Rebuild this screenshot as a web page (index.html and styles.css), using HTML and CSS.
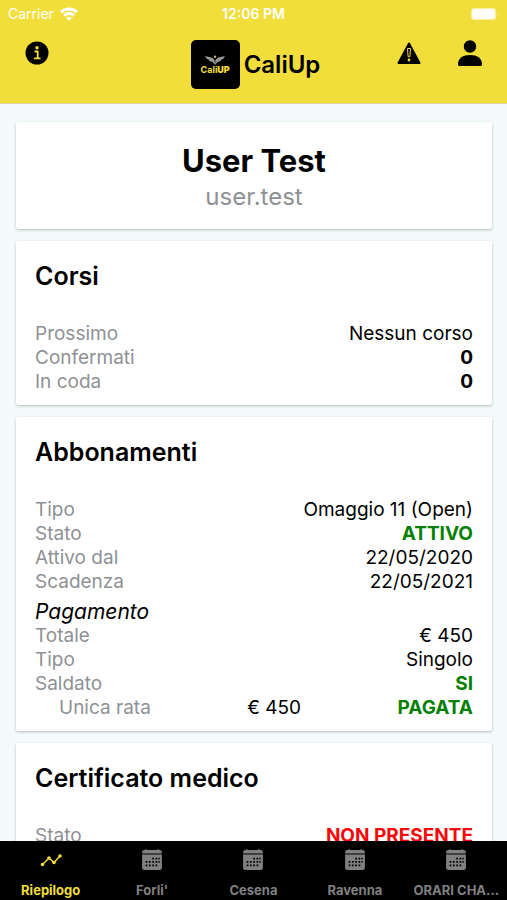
FILE: index.html
```html
<!DOCTYPE html>
<html lang="it">

<head>
    <meta charset="UTF-8">
    <meta name="viewport" content="width=device-width, initial-scale=1">
    <title>CaliUp</title>
    <link rel="stylesheet" href="styles.css">
</head>

<body>
    <svg class="sprite" aria-hidden="true">
        <symbol id="calendar" viewBox="0 0 20 20">
            <path fill="currentColor" d="M3 1h1V0h1v1h10V0h1v1h1a2 2 0 0 1 2 2v1H1V3a2 2 0 0 1 2-2z" />
            <path fill="currentColor" d="M1 5h18v12a2 2 0 0 1-2 2H3a2 2 0 0 1-2-2z" />
            <path fill="#000" d="M10.200 8h1.600v1.600h-1.600zM13.200 8h1.600v1.600h-1.600zM15.800 8h1.200v1.600h-1.200zM4.200 11h1.600v1.600H4.200zM7.200 11h1.600v1.600H7.200zM10.200 11h1.600v1.600h-1.600zM13.200 11h1.600v1.600h-1.600zM15.800 11h1.200v1.600h-1.200zM4.200 14h1.600v1.600H4.200zM7.200 14h1.600v1.600H7.200zM10.200 14h1.600v1.600h-1.600zM13.200 14h1.600v1.600h-1.600z" />
        </symbol>
    </svg>

    <header class="header">
        <div class="status-bar">
            <div class="carrier">
                <span>Carrier</span>
                <svg width="18" height="14" viewBox="0 0 18 14" fill="none" stroke="#fff" stroke-width="3">
                    <path d="M1 5.200a11.300 11.300 0 0 1 16 0" />
                    <path d="M4.200 8.600a6.800 6.800 0 0 1 9.600 0" />
                    <path fill="#fff" stroke="none" d="M9 14l-2.700-2.900a3.900 3.900 0 0 1 5.400 0z" />
                </svg>
            </div>
            <span class="time">12:06 PM</span>
            <svg class="battery" width="28" height="12" viewBox="0 0 28 12">
                <rect width="25" height="12" rx="3" fill="#fff" opacity=".5" />
                <rect x="1" y="1" width="23" height="10" rx="2" fill="#fff" />
                <path d="M26 4q2 2 0 4z" fill="#fff" opacity=".5" />
            </svg>
        </div>
        <div class="toolbar">
            <button type="button" class="icon-button" aria-label="Informazioni">
                <svg width="24" height="26" viewBox="0 0 24 26">
                    <circle cx="12" cy="13" r="11.500" />
                    <circle cx="12" cy="7.700" r="1.700" fill="#f2de3a" />
                    <path d="M9.500 11.500h3.200v6.700M9 18.300h6.500" fill="none" stroke="#f2de3a" stroke-width="1.800" />
                </svg>
            </button>
            <div class="brand">
                <div class="logo">
                    <svg width="22" height="10" viewBox="0 0 24 11" fill="#999">
                        <path d="M1 1l8 2 2.500 2.500L12 11l-3-3.500-3-.5-1-2-2-.5z" />
                        <path d="M23 1l-8 2-2.500 2.500L12 11l3-3.500 3-.5 1-2 2-.5z" />
                        <circle cx="12" cy="1.800" r="1.300" fill="#c9bd57" />
                    </svg>
                    <span class="logo-text">Cali<b>UP</b></span>
                </div>
                <h1>CaliUp</h1>
            </div>
            <div class="actions">
                <button type="button" class="icon-button" aria-label="Avvisi">
                    <svg width="24" height="26" viewBox="0 0 24 26">
                        <path d="M12 3.500L22.500 23h-21z" stroke="#000" stroke-width="2" stroke-linejoin="round" />
                        <path d="M10.500 8.500h3l-.6 8.200h-1.800z" fill="#000" stroke="#f2de3a" stroke-width="1" />
                        <circle cx="12" cy="20" r="1.400" fill="#f2de3a" />
                    </svg>
                </button>
                <button type="button" class="icon-button" aria-label="Profilo">
                    <svg width="24" height="26" viewBox="0 0 24 26">
                        <circle cx="12" cy="6.500" r="6.200" />
                        <path d="M0 24.500C0 18 5 15 12 15s12 3 12 9.500q0 1.500-1.500 1.500h-21Q0 26 0 24.500z" />
                    </svg>
                </button>
            </div>
        </div>
    </header>

    <main class="content">
        <section class="card profile">
            <h2>User Test</h2>
            <p>user.test</p>
        </section>

        <section class="card">
            <h3>Corsi</h3>
            <dl>
                <div class="row"><dt>Prossimo</dt><dd>Nessun corso</dd></div>
                <div class="row"><dt>Confermati</dt><dd class="bold">0</dd></div>
                <div class="row"><dt>In coda</dt><dd class="bold">0</dd></div>
            </dl>
        </section>

        <section class="card">
            <h3>Abbonamenti</h3>
            <dl>
                <div class="row"><dt>Tipo</dt><dd>Omaggio 11 (Open)</dd></div>
                <div class="row"><dt>Stato</dt><dd class="ok">ATTIVO</dd></div>
                <div class="row"><dt>Attivo dal</dt><dd>22/05/2020</dd></div>
                <div class="row"><dt>Scadenza</dt><dd>22/05/2021</dd></div>
            </dl>
            <h4>Pagamento</h4>
            <dl>
                <div class="row"><dt>Totale</dt><dd>€ 450</dd></div>
                <div class="row"><dt>Tipo</dt><dd>Singolo</dd></div>
                <div class="row"><dt>Saldato</dt><dd class="ok">SI</dd></div>
                <div class="row installment"><dt>Unica rata</dt><dd>€ 450</dd><dd class="ok">PAGATA</dd></div>
            </dl>
        </section>

        <section class="card">
            <h3>Certificato medico</h3>
            <dl>
                <div class="row"><dt>Stato</dt><dd class="missing">NON PRESENTE</dd></div>
            </dl>
        </section>
    </main>

    <nav class="tabs">
        <a href="#" class="active">
            <svg width="22" height="22" viewBox="0 0 22 22" fill="currentColor">
                <path d="M2.500 15.500L9 9l5 4.500L20 7" fill="none" stroke="currentColor" stroke-width="1.500" />
                <circle cx="2.500" cy="15.500" r="1.800" />
                <circle cx="9" cy="9" r="1.800" />
                <circle cx="14" cy="13.500" r="1.800" />
                <circle cx="20" cy="7" r="1.800" />
            </svg>
            <span>Riepilogo</span>
        </a>
        <a href="#"><svg width="22" height="22"><use href="#calendar" /></svg><span>Forli'</span></a>
        <a href="#"><svg width="22" height="22"><use href="#calendar" /></svg><span>Cesena</span></a>
        <a href="#"><svg width="22" height="22"><use href="#calendar" /></svg><span>Ravenna</span></a>
        <a href="#"><svg width="22" height="22"><use href="#calendar" /></svg><span>ORARI CHA...</span></a>
    </nav>
</body>

</html>
```
FILE: styles.css
```css
* {
    box-sizing: border-box;
    margin: 0;
    padding: 0;
}

body {
    display: flex;
    flex-direction: column;
    height: 100vh;
    background-color: #f4fbfd;
    color: #000;
    font-family: Inter, "Liberation Sans", sans-serif;
    font-size: 19px;
    line-height: 24px;
}

.sprite {
    display: none;
}

.header {
    flex: none;
    padding-bottom: 14px;
    background-color: #f2de3a;
    border-bottom: 1px solid #d9d4a0;
}

.status-bar {
    display: grid;
    grid-template-columns: 1fr auto 1fr;
    align-items: center;
    height: 28px;
    padding: 0 8px;
    color: #fff;
    font-size: 14px;
}

.carrier {
    display: flex;
    align-items: center;
    gap: 6px;
}

.time {
    font-weight: 600;
}

.battery {
    justify-self: end;
}

.toolbar {
    display: grid;
    grid-template-columns: 1fr auto 1fr;
    padding: 12px 25px 0;
}

.icon-button {
    display: flex;
    align-self: start;
    justify-self: start;
    border: none;
    background: none;
    cursor: pointer;
}

.brand {
    display: flex;
    align-items: center;
    gap: 4px;
    padding-left: 4px;
}

.logo {
    display: flex;
    flex-direction: column;
    align-items: center;
    justify-content: center;
    width: 49px;
    height: 49px;
    border-radius: 5px;
    background-color: #000;
}

.logo-text {
    color: #f2de3a;
    font-size: 9px;
    font-weight: 700;
    line-height: 10px;
}

.brand h1 {
    font-size: 24px;
    font-weight: 600;
}

.actions {
    display: flex;
    justify-content: flex-end;
    gap: 37px;
}

.content {
    flex: 1;
    display: flex;
    flex-direction: column;
    gap: 12px;
    min-height: 0;
    padding: 18px 15px 12px 16px;
    overflow-y: auto;
    scrollbar-width: none;
}

.card {
    flex: none;
    padding: 19px 19px 11px;
    border-radius: 2px;
    background-color: #fff;
    box-shadow: 0 1px 3px rgba(0, 0, 0, 0.25);
}

.profile {
    padding-bottom: 16px;
    text-align: center;
}

.profile h2 {
    font-size: 31px;
    font-weight: 700;
    line-height: 40px;
}

.profile p {
    color: #8e9194;
    font-size: 24px;
    line-height: 32px;
}

.card h3 {
    margin-bottom: 30px;
    font-size: 25px;
    font-weight: 600;
    line-height: 32px;
}

.card h4 {
    margin-top: 6px;
    font-size: 21px;
    font-style: italic;
    font-weight: 400;
}

.row {
    display: flex;
    justify-content: space-between;
}

.row dt {
    color: #8e9194;
}

.installment {
    padding-left: 24px;
}

.bold,
.ok,
.missing {
    font-weight: 700;
}

.ok {
    color: #048004;
}

.missing {
    color: #f80808;
}

.tabs {
    flex: none;
    display: grid;
    grid-template-columns: repeat(5, minmax(0, 1fr));
    height: 59px;
    background-color: #000;
}

.tabs a {
    display: flex;
    flex-direction: column;
    align-items: center;
    justify-content: space-between;
    padding: 8px 4px 2px;
    color: #808080;
    font-size: 13px;
    font-weight: 700;
    line-height: 16px;
    text-decoration: none;
}

.tabs a.active {
    color: #f2de3a;
}

.tabs span {
    max-width: 100%;
    overflow: hidden;
    text-overflow: ellipsis;
    white-space: nowrap;
}
```
